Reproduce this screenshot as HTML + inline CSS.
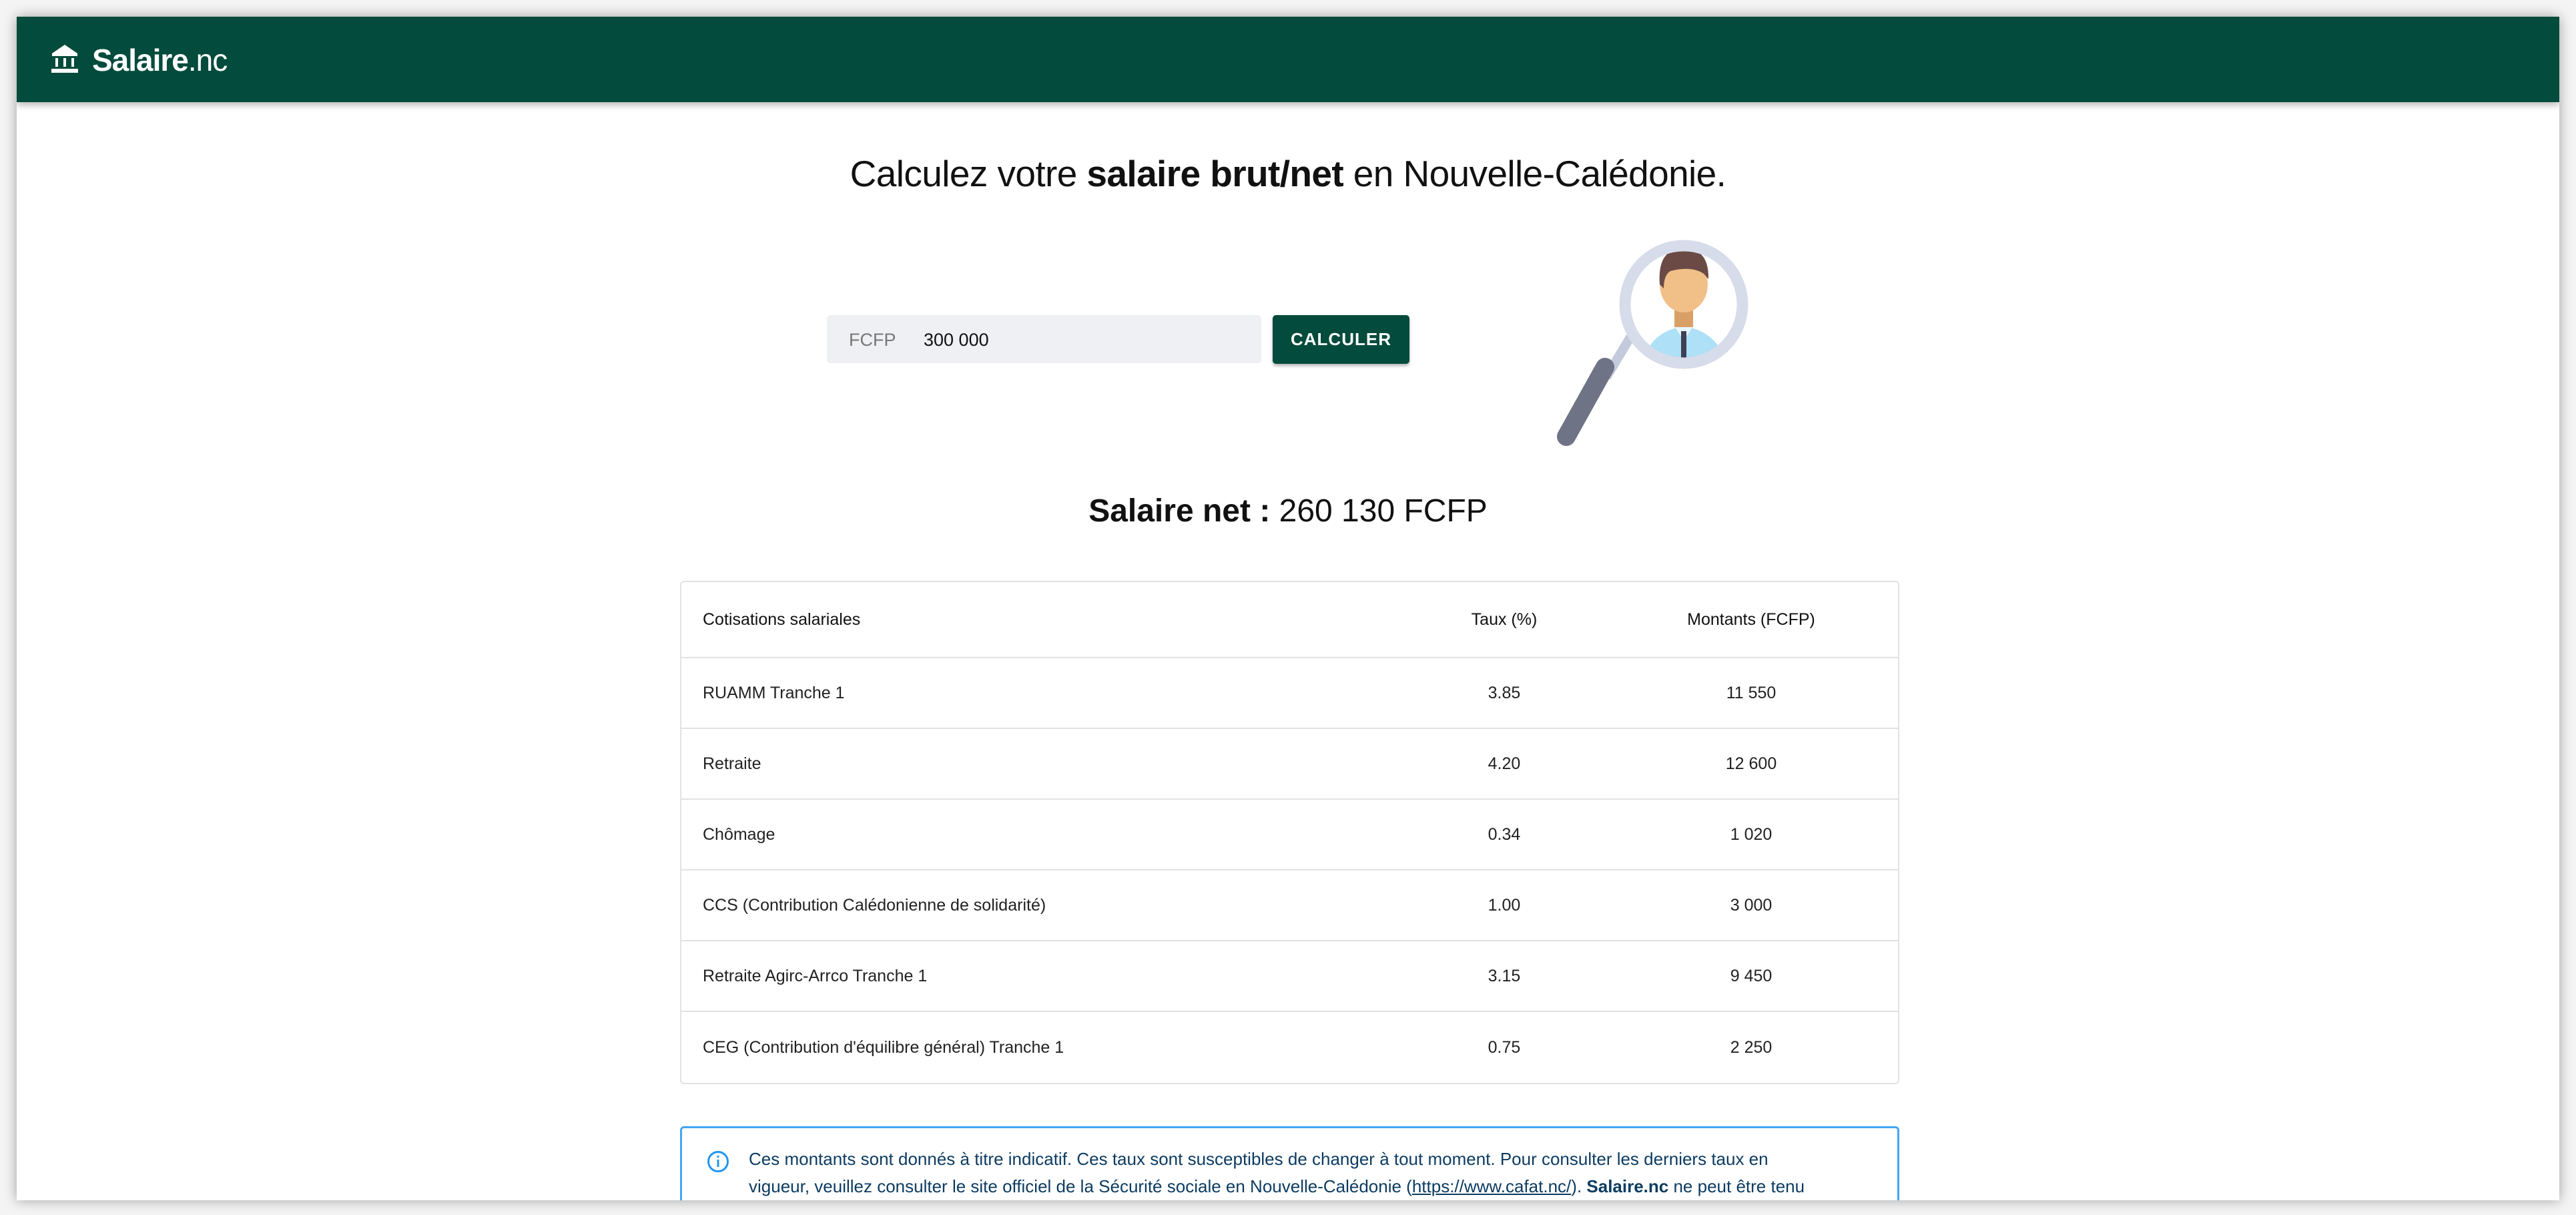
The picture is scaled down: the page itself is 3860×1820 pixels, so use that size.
<!DOCTYPE html>
<html><head><meta charset="utf-8"><style>
*{box-sizing:border-box;margin:0;padding:0}
html,body{width:3860px;height:1820px;overflow:hidden;background:#f4f4f4;font-family:"Liberation Sans",Arial,sans-serif}
.win{position:absolute;left:25px;top:25px;width:3810px;height:1773px;background:#fff;overflow:hidden;box-shadow:0 0 18px rgba(0,0,0,.35)}
.hdr{position:absolute;left:0;top:0;width:100%;height:128px;background:#034b3c;box-shadow:0 4px 10px rgba(0,0,0,.3)}
.logo{position:absolute;left:113px;top:42px;color:#fff;font-size:46px;line-height:46px;letter-spacing:-1px}
.logo b{font-weight:700}
.logo span{font-weight:300}
.title{position:absolute;left:0;width:100%;top:203px;text-align:center;font-size:55px;color:#111;letter-spacing:-.6px}
.inp{position:absolute;left:1214px;top:447px;width:651px;height:72px;background:#eff0f3;border-radius:6px}
.inp .u{position:absolute;left:33px;top:22px;font-size:27px;color:#777}
.inp .v{position:absolute;left:145px;top:22px;font-size:27px;color:#111}
.btn{position:absolute;left:1882px;top:447px;width:205px;height:73px;background:#034b3c;border-radius:5px;color:#fff;font-size:26px;font-weight:700;text-align:center;line-height:73px;letter-spacing:1px;box-shadow:0 3px 5px rgba(0,0,0,.3)}
.net{position:absolute;left:0;width:100%;top:713px;text-align:center;font-size:48px;color:#111}
table{position:absolute;left:994px;top:845px;width:1827px;border-collapse:separate;border-spacing:0;border:2px solid #e2e2e2;border-radius:6px;font-size:25px;color:#222}
td,th{border-bottom:2px solid #e2e2e2;height:106px;padding-left:32px}
th{height:114px;text-align:left;font-weight:400;color:#111}
tr:last-child td{border-bottom:none}
.c{text-align:center;padding-left:0}
.alert{position:absolute;left:994px;top:1662px;width:1827px;height:200px;border:3px solid #42a5f5;border-radius:6px;color:#0d3c61;font-size:26px;line-height:41px;padding:26px 100px 0 100px}
.alert a{color:#0d3c61;text-decoration:underline}
.ico{position:absolute;left:37px;top:33px;width:34px;height:34px}
</style></head><body>
<div class="win">
<div class="hdr">
<svg style="position:absolute;left:51px;top:42px" width="42" height="42" viewBox="0 0 42 42"><path d="M21 0 L40 13 L2 13 Z" fill="#fff"/><rect x="2" y="13" width="38" height="4" fill="#fff"/><rect x="7" y="20" width="4" height="13" fill="#fff"/><rect x="19" y="20" width="4" height="13" fill="#fff"/><rect x="31" y="20" width="4" height="13" fill="#fff"/><rect x="1" y="36" width="40" height="6" fill="#fff"/></svg>
<div class="logo"><b>Salaire</b><span>.nc</span></div>
</div>
<div class="title">Calculez votre <b>salaire brut/net</b> en Nouvelle-Calédonie.</div>
<div class="inp"><span class="u">FCFP</span><span class="v">300 000</span></div>
<div class="btn">CALCULER</div>
<svg style="position:absolute;left:2270px;top:325px" width="360" height="340" viewBox="0 0 360 340">
<line x1="148" y1="155" x2="112" y2="215" stroke="#c3cadb" stroke-width="14"/>
<line x1="110" y1="218" x2="52" y2="322" stroke="#6e7385" stroke-width="28" stroke-linecap="round" transform="translate(0,-18)"/>
<circle cx="228" cy="106" r="84" fill="#fff"/>
<clipPath id="cp"><circle cx="228" cy="106" r="82"/></clipPath>
<g clip-path="url(#cp)">
<path d="M168 200 Q170 150 228 138 Q286 150 290 200 Z" fill="#aee0f7"/>
<path d="M212 136 L228 160 L244 136 Z" fill="#e8f6fc"/>
<rect x="224" y="146" width="8" height="50" fill="#3d4253"/>
<rect x="214" y="108" width="28" height="32" fill="#d9a066"/>
<ellipse cx="228" cy="76" rx="36" ry="42" fill="#f0c088"/>
<path d="M192 76 Q188 22 228 22 Q266 22 265 68 L258 60 Q240 48 208 56 Q198 62 198 82 Z" fill="#6b4a46"/>
</g>
<circle cx="228" cy="106" r="88" fill="none" stroke="#d6dcea" stroke-width="17"/>
</svg>
<div class="net"><b>Salaire net :</b> 260 130 FCFP</div>
<table>
<tr><th>Cotisations salariales</th><th class="c" style="width:300px">Taux (%)</th><th class="c" style="width:440px">Montants (FCFP)</th></tr>
<tr><td>RUAMM Tranche 1</td><td class="c">3.85</td><td class="c">11 550</td></tr>
<tr><td>Retraite</td><td class="c">4.20</td><td class="c">12 600</td></tr>
<tr><td>Chômage</td><td class="c">0.34</td><td class="c">1 020</td></tr>
<tr><td>CCS (Contribution Calédonienne de solidarité)</td><td class="c">1.00</td><td class="c">3 000</td></tr>
<tr><td>Retraite Agirc-Arrco Tranche 1</td><td class="c">3.15</td><td class="c">9 450</td></tr>
<tr><td>CEG (Contribution d'équilibre général) Tranche 1</td><td class="c">0.75</td><td class="c">2 250</td></tr>
</table>
<div class="alert"><svg class="ico" viewBox="0 0 34 34"><circle cx="17" cy="17" r="14.5" fill="none" stroke="#2196f3" stroke-width="3"/><rect x="15.5" y="14" width="3" height="11" fill="#2196f3"/><rect x="15.5" y="8" width="3" height="3" fill="#2196f3"/></svg>Ces montants sont donnés à titre indicatif. Ces taux sont susceptibles de changer à tout moment. Pour consulter les derniers taux en vigueur, veuillez consulter le site officiel de la Sécurité sociale en Nouvelle-Calédonie (<a>https://www.cafat.nc/</a>). <b>Salaire.nc</b> ne peut être tenu responsable.</div>
</div>
</body></html>
